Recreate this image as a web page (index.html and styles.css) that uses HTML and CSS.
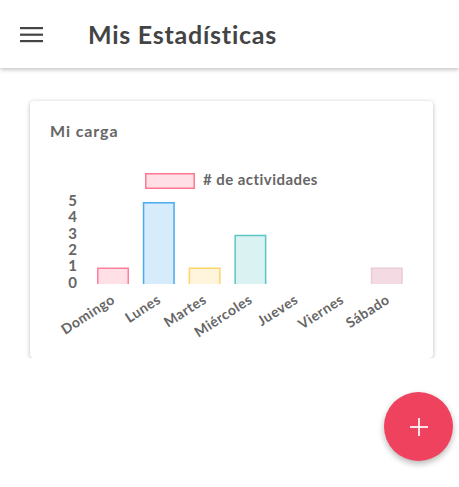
FILE: index.html
```html
<!DOCTYPE html>
<html lang="es">
<head>
<meta charset="utf-8">
<title>Mis Estadísticas</title>
<link rel="stylesheet" href="styles.css">
</head>
<body>
<header class="toolbar">
  <svg class="menu-icon" width="23" height="16" viewBox="0 0 23 16" aria-hidden="true">
    <rect x="0" y="0" width="23" height="2.2" fill="#444"/>
    <rect x="0" y="6.6" width="23" height="2.2" fill="#444"/>
    <rect x="0" y="13" width="23" height="2.2" fill="#444"/>
  </svg>
  <h1 class="title">Mis Estadísticas</h1>
</header>
<main class="content">
  <section class="card">
    <h2 class="card-title">Mi carga</h2>
    <svg class="chart" width="403" height="217" viewBox="0 0 403 217">
      <g class="legend">
        <rect x="115.75" y="32.75" width="48.5" height="14.5" fill="rgba(255,99,132,0.2)" stroke="rgba(255,99,132,0.85)" stroke-width="1.5"/>
        <text x="173" y="40" dominant-baseline="middle">&#35; de actividades</text>
      </g>
      <g class="yaxis" text-anchor="end">
        <text x="47" y="61" dominant-baseline="middle">5</text>
        <text x="47" y="77.4" dominant-baseline="middle">4</text>
        <text x="47" y="93.8" dominant-baseline="middle">3</text>
        <text x="47" y="110.2" dominant-baseline="middle">2</text>
        <text x="47" y="126.6" dominant-baseline="middle">1</text>
        <text x="47" y="143" dominant-baseline="middle">0</text>
      </g>
      <g class="bars" stroke-width="1.5">
        <path d="M67.75 143 V127.35 H98.25 V143" fill="rgba(255,99,132,0.2)" stroke="rgba(255,99,132,0.8)"/>
        <path d="M113.55 143 V61.75 H144.05 V143" fill="rgba(54,162,235,0.2)" stroke="rgba(54,162,235,0.9)"/>
        <path d="M159.35 143 V127.35 H189.85 V143" fill="rgba(255,206,86,0.2)" stroke="rgba(255,206,86,0.9)"/>
        <path d="M205.15 143 V94.55 H235.65 V143" fill="rgba(75,192,192,0.2)" stroke="rgba(75,192,192,0.9)"/>
        <path d="M341.55 143 V127.35 H372.05 V143" fill="#f4dbe3" stroke="#ebcbd6"/>
      </g>
      <g class="xaxis" text-anchor="end" dominant-baseline="middle">
        <text transform="translate(84 158) rotate(-33)">Domingo</text>
        <text transform="translate(129.8 158) rotate(-33)">Lunes</text>
        <text transform="translate(175.6 158) rotate(-33)">Martes</text>
        <text transform="translate(221.4 158) rotate(-33)">Miércoles</text>
        <text transform="translate(267.2 158) rotate(-33)">Jueves</text>
        <text transform="translate(313 158) rotate(-33)">Viernes</text>
        <text transform="translate(358.8 158) rotate(-33)">Sábado</text>
      </g>
    </svg>
  </section>
</main>
<button class="fab" aria-label="Agregar">
  <svg width="20" height="20" viewBox="0 0 20 20" aria-hidden="true">
    <rect x="9" y="1" width="2" height="18" fill="rgba(255,255,255,0.85)"/>
    <rect x="1" y="9" width="18" height="2" fill="rgba(255,255,255,0.85)"/>
  </svg>
</button>
</body>
</html>
```
FILE: styles.css
```css
html, body {
  margin: 0;
  padding: 0;
  background: #ffffff;
  font-family: Lato, "Open Sans", sans-serif;
}

.toolbar {
  height: 68px;
  display: flex;
  align-items: center;
  padding-left: 20px;
  background: #ffffff;
  box-shadow: 0 2px 4px rgba(0, 0, 0, 0.22);
  position: relative;
  z-index: 1;
}

.menu-icon {
  display: block;
  margin-top: 1px;
}

.title {
  margin: 0 0 0 45px;
  font-size: 25px;
  font-weight: 700;
  letter-spacing: 0.75px;
  color: #444444;
  line-height: 1;
}

.content {
  padding: 33px 26px 0 30px;
}

.card {
  width: 403px;
  height: 257px;
  background: #ffffff;
  border-radius: 4px;
  box-shadow: 0 1px 4px rgba(0, 0, 0, 0.28);
  box-sizing: border-box;
}

.card-title {
  margin: 0;
  padding: 20px 20px 0 20px;
  height: 40px;
  box-sizing: border-box;
  font-size: 16px;
  letter-spacing: 0.9px;
  line-height: 20px;
  font-weight: 700;
  color: #666666;
}

.chart {
  display: block;
}

.chart text {
  font-family: Lato, "Open Sans", sans-serif;
  font-weight: 700;
  fill: #666666;
  font-size: 14px;
  letter-spacing: 0.5px;
}

.chart .legend text {
  font-size: 15px;
  letter-spacing: 0.45px;
}

.chart .yaxis text {
  font-size: 15px;
  letter-spacing: 0;
}

.fab {
  position: fixed;
  right: 6px;
  bottom: 26px;
  width: 69px;
  height: 69px;
  border-radius: 50%;
  border: none;
  background: #ef425e;
  box-shadow: 0 3px 6px rgba(0, 0, 0, 0.28);
  display: flex;
  align-items: center;
  justify-content: center;
  padding: 0;
}
```
